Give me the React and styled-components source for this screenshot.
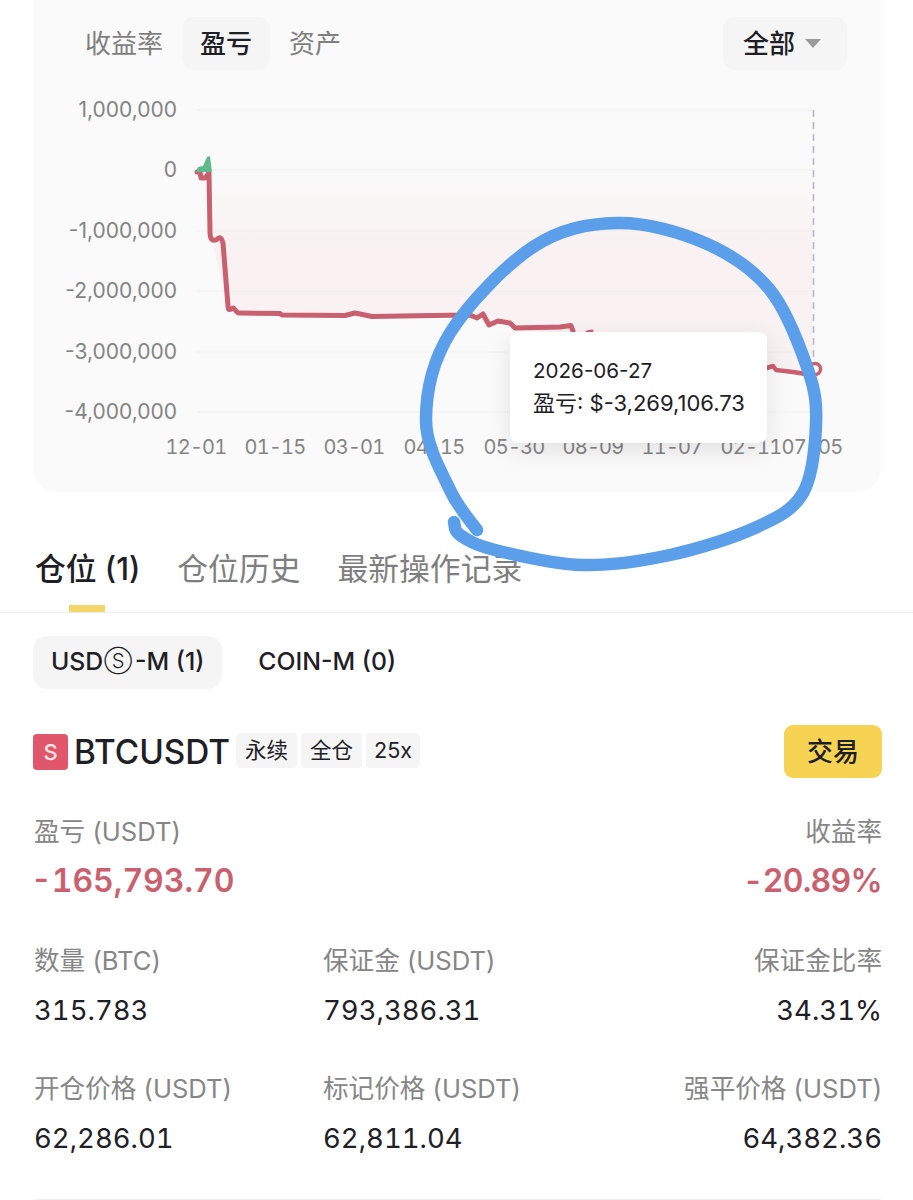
import React from "react";
import styled, { createGlobalStyle } from "styled-components";

const Global = createGlobalStyle`
  html, body { margin: 0; padding: 0; background: #fff; }
  body { font-family: "Inter", "Noto Sans CJK SC", "Noto Sans", sans-serif; color: #1e2026; }
`;

const Page = styled.div`
  position: relative;
  width: 913px;
  height: 1200px;
  overflow: hidden;
  background: #fff;
`;

const ChartCard = styled.section`
  margin: -24px 32px 0 33px;
  height: 516px;
  box-sizing: border-box;
  padding: 41px 34px 0 33px;
  background: #fafafa;
  border-radius: 24px;
  position: relative;
`;

const ChartTabs = styled.div`
  position: relative;
  display: flex;
  align-items: center;
  height: 53px;
`;

const ChartTab = styled.div`
  height: 53px;
  box-sizing: border-box;
  display: flex;
  align-items: center;
  padding: 0 ${(p) => (p.$active ? 18 : 19)}px 5px;
  font-size: 26px;
  border-radius: 12px;
  color: ${(p) => (p.$active ? "#1e2026" : "#7f7f7f")};
  background: ${(p) => (p.$active ? "#f5f5f5" : "transparent")};
  font-weight: ${(p) => (p.$active ? 500 : 400)};
`;

const RangeSelect = styled.div`
  margin-left: auto;
  width: 124px;
  height: 53px;
  box-sizing: border-box;
  padding: 0 0 5px 20px;
  display: flex;
  align-items: center;
  gap: 10px;
  background: #f5f5f5;
  border-radius: 12px;
  font-size: 26px;
  font-weight: 500;
`;

const Caret = styled.span`
  width: 0;
  height: 0;
  border-left: 8px solid transparent;
  border-right: 8px solid transparent;
  border-top: 9px solid #9a9a9a;
  margin-top: 5px;
`;

const ChartFrame = styled.svg`
  position: absolute;
  left: 0;
  top: 0;
  display: block;
  overflow: visible;
`;

const YText = styled.text`
  font-size: 21px;
  fill: #848484;
`;

const XText = styled.text`
  font-size: 20px;
  letter-spacing: -0.8px;
  font-variant-numeric: tabular-nums;
  fill: #848484;
`;

const Tooltip = styled.div`
  position: absolute;
  left: 477px;
  top: 356px;
  width: 257px;
  height: 111px;
  box-sizing: border-box;
  padding: 22px 0 0 23px;
  background: #fff;
  border-radius: 8px;
  box-shadow: 0 8px 24px rgba(0, 0, 0, 0.1);
  line-height: 33px;
  color: #1e2026;
  white-space: nowrap;
`;

const TooltipDate = styled.div`
  font-size: 20.6px;
`;

const TooltipValue = styled.div`
  font-size: 22px;
`;

const TabBar = styled.nav`
  margin: 50px 0 23px;
  height: 71px;
  box-sizing: border-box;
  padding: 0 35px;
  display: flex;
  gap: 37px;
  border-bottom: 1px solid #ececec;
`;

const MainTab = styled.div`
  position: relative;
  height: 48px;
  display: flex;
  align-items: center;
  font-size: 30.8px;
  font-weight: ${(p) => (p.$active ? 500 : 400)};
  color: ${(p) => (p.$active ? "#1e2026" : "#7f7f7f")};
  white-space: nowrap;
`;

const TabMark = styled.span`
  position: absolute;
  left: 34px;
  bottom: -22px;
  width: 36px;
  height: 7px;
  background: #f3d667;
`;

const Segments = styled.div`
  display: flex;
  padding-left: 33px;
`;

const Segment = styled.div`
  height: 53px;
  box-sizing: border-box;
  display: flex;
  align-items: center;
  padding: 0 18px 3px;
  margin-right: 18px;
  border-radius: 14px;
  font-size: 24.8px;
  font-weight: 500;
  background: ${(p) => (p.$active ? "#f5f5f5" : "transparent")};
`;

const CircledS = styled.span`
  font-size: 20px;
  font-weight: 300;
  margin: 0 3px 0 1px;
`;

const SymbolRow = styled.div`
  margin: 36px 31px 0 33px;
  height: 53px;
  display: flex;
  align-items: center;
`;

const SideBadge = styled.span`
  width: 35px;
  height: 36px;
  border-radius: 4px;
  background: #e0566a;
  color: #fbe4e7;
  display: flex;
  align-items: center;
  justify-content: center;
  font-size: 22px;
  font-weight: 500;
  margin-right: 6px;
`;

const Symbol = styled.span`
  font-size: 33.3px;
  font-weight: 500;
  margin-right: 6px;
`;

const Tag = styled.span`
  height: 35px;
  box-sizing: border-box;
  padding: 0 ${(p) => (p.$latin ? 8 : 9)}px ${(p) => (p.$latin ? 1 : 4)}px;
  display: flex;
  align-items: center;
  background: #f5f5f5;
  border-radius: 4px;
  font-size: 21.5px;
  margin: 0 4px 3px 0;
`;

const TradeButton = styled.button`
  margin-left: auto;
  width: 98px;
  height: 53px;
  border: 0;
  padding: 0 0 5px;
  border-radius: 9px;
  background: #f6d352;
  color: #1e2026;
  font: 500 26px "Inter", "Noto Sans CJK SC", sans-serif;
`;

const Stats = styled.div`
  margin: 39px 31px 0 34px;
  display: grid;
  grid-template-columns: 289px 1fr auto;
  row-gap: 48px;
`;

const Stat = styled.div`
  grid-column: ${(p) => p.$col};
  text-align: ${(p) => (p.$right ? "right" : "left")};
`;

const StatLabel = styled.div`
  font-size: 25.6px;
  line-height: 30px;
  color: #868686;
  white-space: nowrap;
`;

const StatValue = styled.div`
  margin-top: 18px;
  font-size: 27.5px;
  line-height: 32px;
  color: #1e2026;
  font-variant-numeric: tabular-nums;
  white-space: nowrap;
`;

const BigValue = styled.div`
  margin-top: 17px;
  margin-left: ${(p) => (p.$tight ? 0 : -3)}px;
  font-size: 32px;
  line-height: 34px;
  font-weight: 600;
  letter-spacing: ${(p) => (p.$tight ? -0.7 : 0)}px;
  color: #c9606f;
  font-variant-numeric: tabular-nums;
  white-space: nowrap;
`;

const BottomRule = styled.div`
  position: absolute;
  left: 34px;
  right: 32px;
  bottom: 0;
  height: 1px;
  background: #efefef;
`;

const Annotation = styled.svg`
  position: absolute;
  left: 0;
  top: 0;
  pointer-events: none;
`;

const GRID_YS = [110, 170, 231, 291, 352, 412];
const Y_LABELS = ["1,000,000", "0", "-1,000,000", "-2,000,000", "-3,000,000", "-4,000,000"];
const X_LABELS = [
  ["12-01", 196], ["01-15", 275], ["03-01", 354], ["04-15", 434], ["05-30", 514],
  ["08-09", 593], ["11-07", 672], ["02-11", 751], ["07-05", 812],
];
const LOSS =
  "M197 172 L200 172 L201 178 L205 178 L209 173 L210 232 C210 240 213 241 216 240 C219 237 221 236 223 243 L228 306 C228 312 231 309 233 308 C235 308 236 313 239 313 L280 313.5 L282 315 L345 315.5 L355 313 L360 314 L372 316.5 L433 315.5 L470 315 L477 318 L483 314 L489 325 L498 321 L510 323 L515 328 L560 327 L571 325.5 L573 331";
const LOSS_DOT = "M587 332 L592 331";
const LOSS_TAIL = "M767 368 L773 366 L776 370 L793 372 L812 375";
const AREA = "M210 172 L210 232 L228 310 L345 316 L472 316 L514 328 L768 365 L812 375 L812 172 Z";
const GAIN = "M196 172 L198 167 L203 166 L207 157 L210 156 L212 172 Z";

const STROKE = [
  [477, 530], [450, 490], [426, 420], [450, 333], [533, 247], [617, 223], [705, 243],
  [770, 290], [808, 370], [816, 425], [803, 493], [757, 527], [670, 555], [582, 565], [495, 550],
  [460, 535], [454, 522],
];

function smoothPath(pts) {
  let d = `M${pts[0][0]} ${pts[0][1]}`;
  for (let i = 0; i < pts.length - 1; i++) {
    const p0 = pts[Math.max(i - 1, 0)];
    const p1 = pts[i];
    const p2 = pts[i + 1];
    const p3 = pts[Math.min(i + 2, pts.length - 1)];
    const c1 = [p1[0] + (p2[0] - p0[0]) / 6, p1[1] + (p2[1] - p0[1]) / 6];
    const c2 = [p2[0] - (p3[0] - p1[0]) / 6, p2[1] - (p3[1] - p1[1]) / 6];
    d += ` C${c1[0]} ${c1[1]} ${c2[0]} ${c2[1]} ${p2[0]} ${p2[1]}`;
  }
  return d;
}

export default function App() {
  return (
    <Page>
      <Global />
      <ChartCard>
        <ChartFrame width="913" height="540" viewBox="33 -24 913 540">
          <defs>
            <linearGradient id="lossFill" x1="0" y1="0" x2="0" y2="1">
              <stop offset="0" stopColor="#f6dfe2" stopOpacity="0.02" />
              <stop offset="0.4" stopColor="#f6dfe2" stopOpacity="0.35" />
              <stop offset="1" stopColor="#f6dfe2" stopOpacity="0.3" />
            </linearGradient>
          </defs>
          <path d={AREA} fill="url(#lossFill)" />
          {GRID_YS.map((y) => (
            <line key={y} x1="197" x2="813" y1={y} y2={y} stroke="#f0eeee" strokeWidth="1.2" />
          ))}
          {Y_LABELS.map((t, i) => (
            <YText key={t} x="177" y={GRID_YS[i] + 7} textAnchor="end">{t}</YText>
          ))}
          {X_LABELS.map(([t, x]) => (
            <XText key={t} x={x} y="454" textAnchor="middle">{t}</XText>
          ))}
          <line x1="813.5" x2="813.5" y1="110" y2="364" stroke="#b9b6c9" strokeWidth="1.6" strokeDasharray="7 5" />
          <path d={LOSS} fill="none" stroke="#c9606f" strokeWidth="5" strokeLinejoin="round" strokeLinecap="round" />
          <path d={LOSS_DOT} fill="none" stroke="#c9606f" strokeWidth="3" strokeLinecap="round" />
          <path d={LOSS_TAIL} fill="none" stroke="#c9606f" strokeWidth="4.5" strokeLinejoin="round" strokeLinecap="round" />
          <path d={GAIN} fill="#5fba8d" />
          <circle cx="815" cy="369" r="5.5" fill="none" stroke="#c9606f" strokeWidth="3.5" />
        </ChartFrame>
        <ChartTabs>
          <ChartTab>收益率</ChartTab>
          <ChartTab $active>盈亏</ChartTab>
          <ChartTab>资产</ChartTab>
          <RangeSelect>全部<Caret /></RangeSelect>
        </ChartTabs>
        <Tooltip>
          <TooltipDate>2026-06-27</TooltipDate>
          <TooltipValue>盈亏: $-3,269,106.73</TooltipValue>
        </Tooltip>
      </ChartCard>

      <TabBar>
        <MainTab $active>仓位 (1)<TabMark /></MainTab>
        <MainTab>仓位历史</MainTab>
        <MainTab>最新操作记录</MainTab>
      </TabBar>

      <Segments>
        <Segment $active>USD<CircledS>Ⓢ</CircledS>-M (1)</Segment>
        <Segment>COIN-M (0)</Segment>
      </Segments>

      <SymbolRow>
        <SideBadge>S</SideBadge>
        <Symbol>BTCUSDT</Symbol>
        <Tag>永续</Tag>
        <Tag>全仓</Tag>
        <Tag $latin>25x</Tag>
        <TradeButton>交易</TradeButton>
      </SymbolRow>

      <Stats>
        <Stat $col="1 / 3">
          <StatLabel>盈亏 (USDT)</StatLabel>
          <BigValue>-165,793.70</BigValue>
        </Stat>
        <Stat $col="3" $right>
          <StatLabel>收益率</StatLabel>
          <BigValue $tight>-20.89%</BigValue>
        </Stat>
        <Stat $col="1">
          <StatLabel>数量 (BTC)</StatLabel>
          <StatValue>315.783</StatValue>
        </Stat>
        <Stat $col="2">
          <StatLabel>保证金 (USDT)</StatLabel>
          <StatValue>793,386.31</StatValue>
        </Stat>
        <Stat $col="3" $right>
          <StatLabel>保证金比率</StatLabel>
          <StatValue>34.31%</StatValue>
        </Stat>
        <Stat $col="1">
          <StatLabel>开仓价格 (USDT)</StatLabel>
          <StatValue>62,286.01</StatValue>
        </Stat>
        <Stat $col="2">
          <StatLabel>标记价格 (USDT)</StatLabel>
          <StatValue>62,811.04</StatValue>
        </Stat>
        <Stat $col="3" $right>
          <StatLabel>强平价格 (USDT)</StatLabel>
          <StatValue>64,382.36</StatValue>
        </Stat>
      </Stats>
      <BottomRule />

      <Annotation width="913" height="1200" viewBox="0 0 913 1200">
        <path d={smoothPath(STROKE)} fill="none" stroke="#5b9ee9" strokeWidth="12.5" strokeLinecap="round" strokeLinejoin="round" />
      </Annotation>
    </Page>
  );
}
